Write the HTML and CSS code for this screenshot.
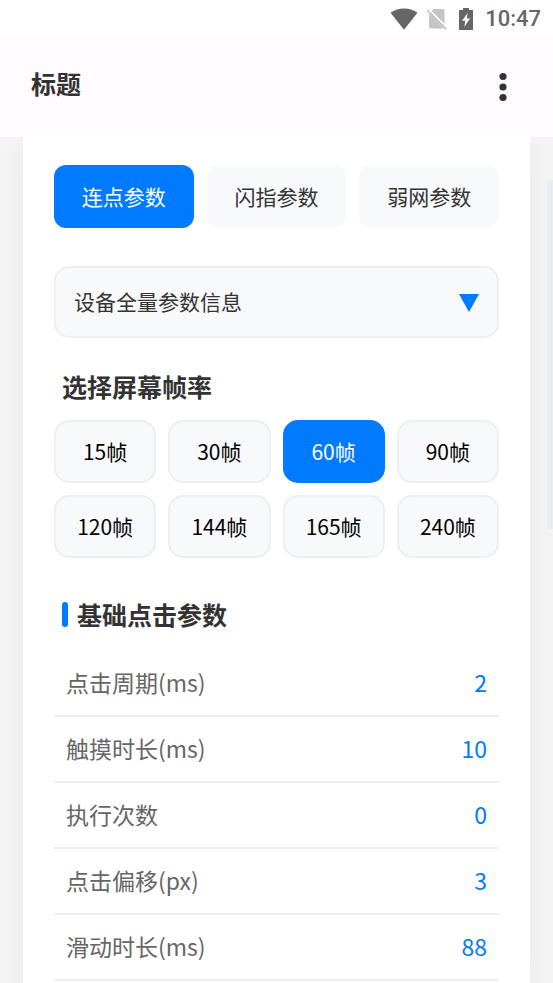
FILE: index.html
```html
<!DOCTYPE html>
<html lang="zh-CN">
<head>
<meta charset="utf-8">
<meta name="viewport" content="width=device-width, initial-scale=1">
<title>标题</title>
<link rel="stylesheet" href="styles.css">
</head>
<body>
<div class="status-bar">
  <svg class="icon-wifi" viewBox="0 0 28 22" aria-hidden="true"><path d="M0.5 4.8C8 -1.1 20 -1.1 27.5 4.8L14 21.8Z" fill="#666"/></svg>
  <svg class="icon-sim" viewBox="0 0 22 22" aria-hidden="true"><path d="M7.500 1H17Q18.500 1 18.500 2.500V17.200L5 3.700ZM3 6L17.500 20.500H4.500Q3 20.500 3 19Z" fill="#c4c4c4"/><path d="M3 6L5 3.700L18.500 17.200L17.500 20.500Z" fill="#c4c4c4"/><path d="M2.500 1.200L21.500 20" stroke="#fff" stroke-width="1.800"/><path d="M1.200 2.400L20.400 21.400" stroke="#c4c4c4" stroke-width="1.600"/></svg>
  <svg class="icon-battery" viewBox="0 0 16 24" aria-hidden="true"><path d="M5 1H11V3H15V23H1V3H5Z" fill="#666"/><path d="M9.700 6L4 13.700H7.300L6.300 20L12 11.600H8.700Z" fill="#fff"/></svg>
  <time class="clock">10:47</time>
</div>
<header class="app-bar">
  <h1 class="app-title">标题</h1>
  <button class="menu-button" type="button" aria-label="更多">
    <svg viewBox="0 0 8 30" aria-hidden="true"><g fill="#333"><circle cx="4" cy="4.500" r="3.600"/><circle cx="4" cy="15" r="3.600"/><circle cx="4" cy="25.500" r="3.600"/></g></svg>
  </button>
</header>
<main class="page">
  <div class="card">
    <nav class="tabs">
      <button class="tab active" type="button">连点参数</button>
      <button class="tab" type="button">闪指参数</button>
      <button class="tab" type="button">弱网参数</button>
    </nav>
    <div class="picker">
      <select class="picker-select" aria-label="设备全量参数信息"><option>设备全量参数信息</option></select>
      <svg class="picker-arrow" viewBox="0 0 20 18" aria-hidden="true"><path d="M0 0H20L10 18Z" fill="#007aff"/></svg>
    </div>
    <h2 class="heading">选择屏幕帧率</h2>
    <div class="rates">
      <button class="rate" type="button">15帧</button>
      <button class="rate" type="button">30帧</button>
      <button class="rate active" type="button">60帧</button>
      <button class="rate" type="button">90帧</button>
      <button class="rate" type="button">120帧</button>
      <button class="rate" type="button">144帧</button>
      <button class="rate" type="button">165帧</button>
      <button class="rate" type="button">240帧</button>
    </div>
    <h2 class="heading marked">基础点击参数</h2>
    <table class="params">
      <tbody>
        <tr><th scope="row">点击周期(ms)</th><td>2</td></tr>
        <tr><th scope="row">触摸时长(ms)</th><td>10</td></tr>
        <tr><th scope="row">执行次数</th><td>0</td></tr>
        <tr><th scope="row">点击偏移(px)</th><td>3</td></tr>
        <tr><th scope="row">滑动时长(ms)</th><td>88</td></tr>
      </tbody>
    </table>
  </div>
  <div class="scroll-thumb"></div>
</main>
</body>
</html>
```
FILE: styles.css
```css
* {
  box-sizing: border-box;
}

body {
  margin: 0;
  min-height: 100vh;
  display: flex;
  flex-direction: column;
  background: #f4f4f4;
  color: #333;
  font-family: "Noto Sans CJK SC", sans-serif;
}

button,
select {
  margin: 0;
  padding: 0;
  border: 0;
  color: inherit;
  font-family: inherit;
}

.status-bar {
  display: flex;
  align-items: center;
  justify-content: flex-end;
  height: 37px;
  padding-right: 12px;
  background: #fff;
}

.icon-wifi {
  width: 28px;
  height: 22px;
  margin-right: 8px;
}

.icon-sim {
  width: 22px;
  height: 22px;
  margin-right: 10px;
}

.icon-battery {
  width: 16px;
  height: 24px;
  margin-right: 11px;
}

.clock {
  color: #666;
  font: 500 22px/36px Roboto, sans-serif;
}

.app-bar {
  display: flex;
  align-items: center;
  justify-content: space-between;
  height: 100px;
  padding: 0 46px 8px 31px;
  background: #fffbff;
}

.app-title {
  margin: 0;
  font-size: 25px;
  line-height: 36px;
  font-weight: 700;
}

.menu-button {
  display: flex;
  padding-top: 8px;
  background: none;
}

.menu-button svg {
  width: 8px;
  height: 30px;
}

.page {
  position: relative;
  display: flex;
  flex: 1;
  padding: 0 23px;
  overflow: hidden;
}

.card {
  flex: 1;
  min-width: 0;
  padding: 28px 31px 0;
  background: #fff;
  box-shadow: 0 6px 30px rgba(0, 0, 0, 0.05);
}

.tabs {
  display: grid;
  grid-template-columns: repeat(3, 1fr);
  gap: 13px;
}

.tab {
  height: 63px;
  padding-bottom: 2px;
  border-radius: 12px;
  background: #f8f9fb;
  font-size: 21px;
}

.picker {
  position: relative;
  margin: 38px 0 30px;
}

.picker-select {
  display: block;
  width: 100%;
  height: 72px;
  padding: 0 18px 2px;
  border: 2px solid #eee;
  border-radius: 15px;
  background: #f8f9fb;
  font-size: 21px;
  appearance: none;
}

.picker-arrow {
  position: absolute;
  top: 28px;
  right: 20px;
  width: 20px;
  height: 18px;
  pointer-events: none;
}

.heading {
  margin: 0;
  padding-left: 8px;
  font-size: 25px;
  line-height: 36px;
  font-weight: 700;
}

.rates {
  display: grid;
  grid-template-columns: repeat(4, 1fr);
  gap: 12px;
  margin: 16px 0 38px;
}

.rate {
  height: 63px;
  padding-bottom: 2px;
  border: 2px solid #eee;
  border-radius: 15px;
  background: #f8f9fb;
  color: #000;
  font-size: 21px;
}

.tab.active,
.rate.active {
  border-color: #007aff;
  background: #007aff;
  color: #fff;
}

.marked {
  display: flex;
  align-items: center;
  gap: 9px;
}

.marked::before {
  content: "";
  width: 6px;
  height: 25px;
  border-radius: 3px;
  background: #007aff;
}

.params {
  width: 100%;
  margin-top: 19px;
  border-spacing: 0;
  font-size: 23px;
  line-height: 34px;
}

.params th,
.params td {
  height: 66px;
  padding: 0 12px 2px;
  border-bottom: 2px solid #eee;
  font-weight: 400;
}

.params th {
  color: #666;
  text-align: left;
}

.params td {
  color: #007aff;
  text-align: right;
}

.scroll-thumb {
  position: absolute;
  top: 43px;
  right: 0;
  width: 6px;
  height: 349px;
  background: #e9edf2;
}
```
